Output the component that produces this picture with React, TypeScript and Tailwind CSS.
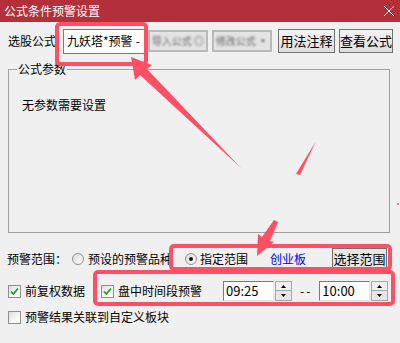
import React from "react";

const Radio = ({ checked }: { checked?: boolean }) => (
  <svg width="12" height="12" viewBox="0 0 12 12" className="shrink-0">
    <defs>
      <linearGradient id="rg" x1="0" y1="0" x2="1" y2="1">
        <stop offset="0" stopColor="#d8d8d8" />
        <stop offset="1" stopColor="#ffffff" />
      </linearGradient>
    </defs>
    <circle cx="6" cy="6" r="5.5" fill="url(#rg)" stroke="#8e8f8f" />
    {checked && <circle cx="6" cy="6" r="2" fill="#111" />}
  </svg>
);

const Check = ({ checked }: { checked?: boolean }) => (
  <svg width="13" height="13" viewBox="0 0 13 13" className="shrink-0">
    <defs>
      <linearGradient id="cg" x1="0" y1="0" x2="1" y2="1">
        <stop offset="0" stopColor="#dcdcdc" />
        <stop offset="0.6" stopColor="#f7f7f7" />
        <stop offset="1" stopColor="#ffffff" />
      </linearGradient>
    </defs>
    <rect x="0.5" y="0.5" width="12" height="12" fill="url(#cg)" stroke="#8e8f8f" />
    {checked && (
      <path d="M3 6.5 L5.3 9 L10 3.5" fill="none" stroke="#1e9b2a" strokeWidth="1.8" />
    )}
  </svg>
);

const Spin = () => (
  <div className="flex h-[20px] w-[17px] flex-col">
    <div className="flex h-[10px] items-center justify-center border border-[#a6a6a6] bg-[#efefef]">
      <svg width="5" height="3" viewBox="0 0 5 3">
        <path d="M0 3 L2.5 0 L5 3Z" fill="#000" />
      </svg>
    </div>
    <div className="flex h-[10px] items-center justify-center border border-t-0 border-[#a6a6a6] bg-[#e6e6e6]">
      <svg width="5" height="3" viewBox="0 0 5 3">
        <path d="M0 0 L2.5 3 L5 0Z" fill="#000" />
      </svg>
    </div>
  </div>
);

const TimeBox = ({ value }: { value: string }) => (
  <div className="flex items-center">
    <div className="flex h-[20px] w-[51px] items-center border border-[#7a7a7a] border-b-[#e3e3e3] border-r-[#e3e3e3] bg-white pl-[2px] text-[13px]">
      {value}
    </div>
    <div className="ml-[1px]">
      <Spin />
    </div>
  </div>
);

const WinButton = ({ label, w }: { label: string; w: string }) => (
  <button
    className={`flex h-[24px] ${w} items-center justify-center border border-[#707070] bg-gradient-to-b from-[#f4f4f4] to-[#dddddd] text-[13px]`}
  >
    {label}
  </button>
);

const BlurButton = ({ label }: { label: string }) => (
  <div className="flex h-[22px] w-[60px] items-center justify-center border-2 border-[#b9b9b9] bg-[#e4e4e4]">
    <span className="text-[10px] text-[#666] blur-[1px]">{label}</span>
  </div>
);

export default function App() {
  return (
    <div className="relative h-[343px] w-[400px] overflow-hidden bg-[#f0f0f0] font-['Noto_Sans_CJK_SC','Noto_Sans',sans-serif] text-[12px] leading-[14px] text-black">
      <div className="flex h-[22px] items-center justify-between bg-[#b3303a] pl-[4px] pr-[6px] text-white">
        <span>公式条件预警设置</span>
        <svg width="10" height="10" viewBox="0 0 10 10">
          <path d="M0 0 L10 10 M10 0 L0 10" stroke="#fff" strokeWidth="1" />
        </svg>
      </div>

      <div className="mt-[7px] flex h-[24px] items-center pl-[8px]">
        <span className="w-[55px]">选股公式</span>
        <div className="flex h-[25px] w-[82px] items-center justify-between whitespace-nowrap border border-[#7a7a7a] bg-white pl-[3px] pr-[4px] text-[12px]">
          <span>九妖塔*预警</span>
          <span>-</span>
        </div>
        <div className="ml-[3px]">
          <BlurButton label="导入公式 ◎" />
        </div>
        <div className="ml-[4px]">
          <BlurButton label="修改公式 ▪" />
        </div>
        <div className="ml-[6px]">
          <WinButton label="用法注释" w="w-[57px]" />
        </div>
        <div className="ml-[4px]">
          <WinButton label="查看公式" w="w-[54px]" />
        </div>
      </div>

      <fieldset className="ml-[8px] mt-[9px] h-[171px] w-[382px] border border-[#a0a0a0]">
        <legend className="ml-[8px] px-[1px] leading-[14px]">公式参数</legend>
        <div className="pl-[13px] pt-[22px]">无参数需要设置</div>
      </fieldset>

      <div className="mt-[15px] flex h-[21px] items-center pl-[7px]">
        <span className="w-[65px]">预警范围：</span>
        <Radio />
        <span className="ml-[4px] w-[81px] whitespace-nowrap">预设的预警品种</span>
        <div className="ml-[16px]">
          <Radio checked />
        </div>
        <span className="ml-[3px]">指定范围</span>
        <span className="ml-[22px] text-[#0000ff]">创业板</span>
        <button className="ml-[26px] flex h-[21px] w-[55px] items-center justify-center border border-[#707070] bg-[#e6e6e6] text-[13px]">
          选择范围
        </button>
      </div>

      <div className="mt-[11px] flex h-[22px] items-center pl-[8px]">
        <Check checked />
        <span className="ml-[4px]">前复权数据</span>
        <div className="ml-[16px]">
          <Check checked />
        </div>
        <span className="ml-[4px]">盘中时间段预警</span>
        <div className="ml-[21px]">
          <TimeBox value="09:25" />
        </div>
        <span className="ml-[8px] tracking-[2px]">--</span>
        <div className="ml-[7px]">
          <TimeBox value="10:00" />
        </div>
      </div>

      <div className="mt-[8px] flex h-[14px] items-center pl-[8px]">
        <Check />
        <span className="ml-[4px]">预警结果关联到自定义板块</span>
      </div>

      <svg
        className="pointer-events-none absolute left-0 top-0"
        width="400"
        height="343"
        viewBox="0 0 400 343"
      >
        <g fill="none" stroke="#ff4f64" strokeWidth="4">
          <rect x="57" y="24" width="89" height="40" rx="3" />
          <rect x="171" y="246" width="219" height="23" rx="3" />
          <rect x="95" y="272" width="298" height="32" rx="3" />
        </g>
        <g fill="#ff4f64">
          <path d="M131 57 L135 80 L140 75 L241 168 L147 69 L152 65 Z" />
          <path d="M316 141 L296 174 L300 175 Z" />
          <path d="M278 222 L270 241 L274 242 L257 256 L258 234 L262 237 L274 220 Z" />
          <circle cx="398" cy="204" r="1" />
        </g>
      </svg>
    </div>
  );
}
